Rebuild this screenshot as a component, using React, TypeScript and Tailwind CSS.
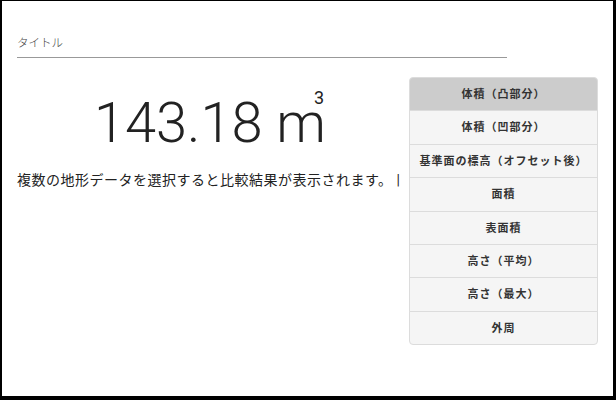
import React from "react";

const ITEMS = [
  "体積（凸部分）",
  "体積（凹部分）",
  "基準面の標高（オフセット後）",
  "面積",
  "表面積",
  "高さ（平均）",
  "高さ（最大）",
  "外周",
];

const jp = "font-['Roboto','Noto_Sans_CJK_JP',sans-serif]";

export default function App() {
  const active = 0;
  return (
    <div className="w-[616px] h-[400px] bg-black pl-[2px] pt-[1px] pr-[3px] pb-[4px]">
      <div className={`bg-white h-full px-[15px] ${jp} text-[#333]`}>
        {/* header */}
        <div className="w-[490px] pt-[33px] pb-[5px] border-b border-[#999]">
          <h1 className="text-[11.5px] leading-[18px] font-light text-[#444]">タイトル</h1>
        </div>

        <div className="flex gap-[8px] mt-[19px]">
          {/* result */}
          <div className="flex-1 min-w-0">
            <div className="mt-[18px] text-center font-['Roboto',sans-serif] font-light text-[56px] leading-[57px] text-[#222]">
              143.18 m
              <span className="inline-block align-top -ml-[12px] -mt-[7px] text-[18px] leading-[20px] font-normal">3</span>
            </div>
            <p className="mt-[18px] text-[14px] leading-[20px] tracking-[0.5px] text-[#222]">
              複数の地形データを選択すると比較結果が表示されます。<span className="ml-[4px] text-[#222]">|</span>
            </p>
          </div>

          {/* menu */}
          <div className="w-[189px] flex flex-col">
            {ITEMS.map((label, i) => (
              <button
                key={label}
                className={`h-[34.4px] pt-[2px] -mt-px first:mt-0 border border-[#dcdcdc] text-[11px] font-semibold tracking-[1px] text-[#333] first:rounded-t-[4px] last:rounded-b-[4px] ${
                  i === active ? "bg-[#cccccc]" : "bg-[#f5f5f5]"
                }`}
              >
                {label}
              </button>
            ))}
          </div>
        </div>
      </div>
    </div>
  );
}
